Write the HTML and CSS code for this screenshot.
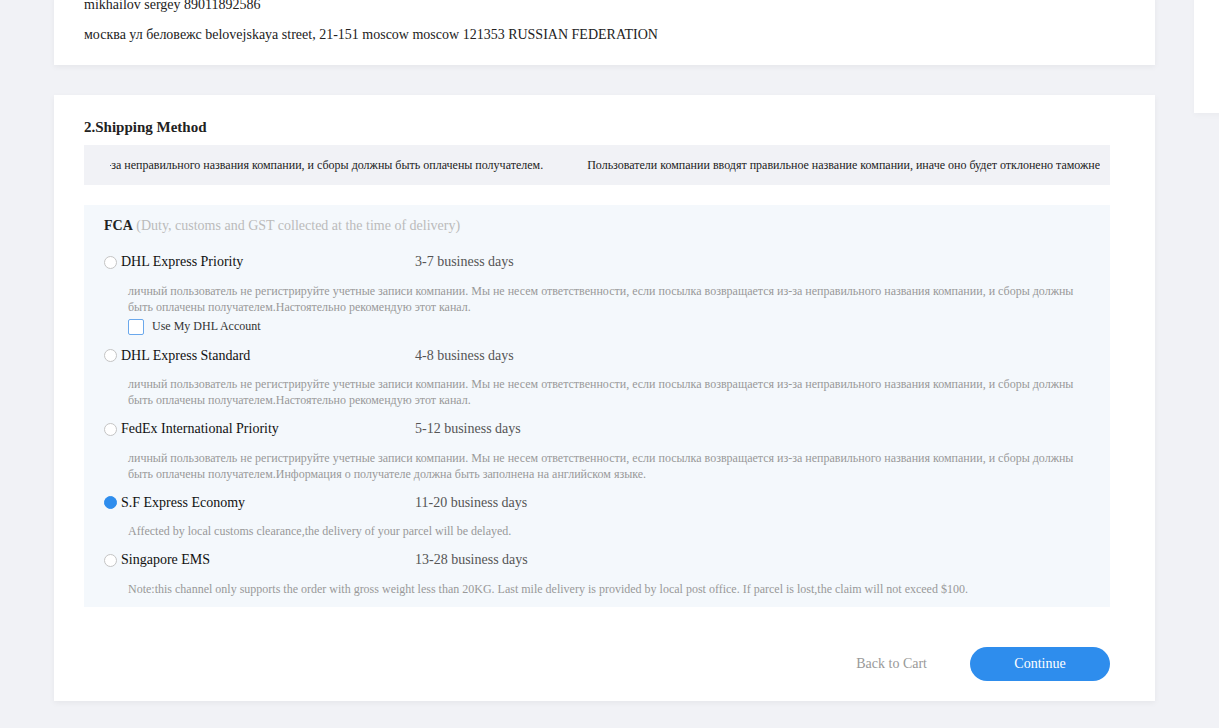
FILE: index.html
```html
<!DOCTYPE html>
<html lang="ru">
<head>
<meta charset="utf-8">
<title>Checkout</title>
<link rel="stylesheet" href="styles.css">
</head>
<body>
<div class="page">
  <main class="main">
    <section class="card address-card">
      <p class="addr-line">mikhailov sergey 89011892586</p>
      <p class="addr-line">москва ул беловежс belovejskaya street, 21-151 moscow moscow 121353 RUSSIAN FEDERATION</p>
    </section>

    <section class="card shipping-card">
      <h2 class="section-title">2.Shipping Method</h2>
      <div class="notice">
        <div class="notice-clip">
          <div class="notice-track">
            <span class="notice-item first">из-за неправильного названия компании, и сборы должны быть оплачены получателем.</span>
            <span class="notice-item">Пользователи компании вводят правильное название компании, иначе оно будет отклонено таможней.</span>
          </div>
        </div>
      </div>

      <div class="methods">
        <div class="group-title"><b>FCA</b> <span class="group-note">(Duty, customs and GST collected at the time of delivery)</span></div>

        <div class="option">
          <div class="opt-row"><span class="radio"></span><span class="opt-name">DHL Express Priority</span><span class="opt-days">3-7 business days</span></div>
          <p class="opt-desc">личный пользователь не регистрируйте учетные записи компании. Мы не несем ответственности, если посылка возвращается из-за неправильного названия компании, и сборы должны быть оплачены получателем.Настоятельно рекомендую этот канал.</p>
          <div class="chk-row"><span class="checkbox"></span><span class="chk-label">Use My DHL Account</span></div>
        </div>

        <div class="option">
          <div class="opt-row"><span class="radio"></span><span class="opt-name">DHL Express Standard</span><span class="opt-days">4-8 business days</span></div>
          <p class="opt-desc">личный пользователь не регистрируйте учетные записи компании. Мы не несем ответственности, если посылка возвращается из-за неправильного названия компании, и сборы должны быть оплачены получателем.Настоятельно рекомендую этот канал.</p>
        </div>

        <div class="option">
          <div class="opt-row"><span class="radio"></span><span class="opt-name">FedEx International Priority</span><span class="opt-days">5-12 business days</span></div>
          <p class="opt-desc">личный пользователь не регистрируйте учетные записи компании. Мы не несем ответственности, если посылка возвращается из-за неправильного названия компании, и сборы должны быть оплачены получателем.Информация о получателе должна быть заполнена на английском языке.</p>
        </div>

        <div class="option">
          <div class="opt-row"><span class="radio checked"></span><span class="opt-name">S.F Express Economy</span><span class="opt-days">11-20 business days</span></div>
          <p class="opt-desc">Affected by local customs clearance,the delivery of your parcel will be delayed.</p>
        </div>

        <div class="option">
          <div class="opt-row"><span class="radio"></span><span class="opt-name">Singapore EMS</span><span class="opt-days">13-28 business days</span></div>
          <p class="opt-desc">Note:this channel only supports the order with gross weight less than 20KG. Last mile delivery is provided by local post office. If parcel is lost,the claim will not exceed $100.</p>
        </div>
      </div>

      <div class="actions">
        <a class="back-link">Back to Cart</a>
        <button class="continue-btn" type="button">Continue</button>
      </div>
    </section>
  </main>
  <aside class="sidebar"></aside>
</div>
</body>
</html>
```

FILE: styles.css
```css
html, body {
  margin: 0;
  padding: 0;
  height: 100%;
  overflow: hidden;
}
body {
  background: #f1f2f6;
  font-family: "Liberation Serif", "Times New Roman", serif;
  color: #222;
}
.page {
  display: flex;
  align-items: flex-start;
  gap: 39px;
  padding-left: 54px;
  margin-top: -5px;
}
.main {
  flex: 0 0 1101px;
  width: 1101px;
  display: flex;
  flex-direction: column;
  gap: 30px;
}
.sidebar {
  flex: 0 0 300px;
  height: 118px;
  background: #fff;
  box-shadow: 0 2px 6px rgba(0, 0, 0, 0.03);
}
.card {
  background: #fff;
  box-shadow: 0 2px 6px rgba(0, 0, 0, 0.05);
}
.address-card {
  padding: 0 30px 20px;
}
.addr-line {
  margin: 0 0 10px;
  font-size: 14px;
  line-height: 20px;
  color: #222;
}
.addr-line:last-child {
  margin-bottom: 0;
}
.shipping-card {
  padding: 22px 45px 20px 30px;
}
.section-title {
  margin: 0 0 8px;
  font-size: 15px;
  line-height: 20px;
  font-weight: bold;
  color: #222;
}
.notice {
  height: 40px;
  background: #f1f2f6;
  padding: 0 10px 0 26px;
  display: flex;
  align-items: center;
}
.notice-clip {
  overflow: hidden;
  width: 100%;
}
.notice-track {
  display: flex;
  gap: 44px;
  white-space: nowrap;
  font-size: 12px;
  line-height: 16px;
  color: #222;
}
.notice-item.first {
  margin-left: -14px;
}
.methods {
  margin-top: 20px;
  background: #f4f8fc;
  padding: 11px 20px 10px;
}
.group-title {
  font-size: 14px;
  line-height: 20px;
  margin-bottom: 16px;
}
.group-title b {
  color: #222;
}
.group-note {
  color: #bbb;
}
.option {
  margin-bottom: 11px;
}
.option:last-child {
  margin-bottom: 0;
}
.opt-row {
  display: flex;
  align-items: center;
  height: 20px;
  font-size: 14px;
}
.radio {
  box-sizing: border-box;
  width: 13px;
  height: 13px;
  border: 1px solid #c4c4c4;
  border-radius: 50%;
  background: #fff;
  margin-right: 4px;
  flex: 0 0 13px;
}
.radio.checked {
  border-color: #2e8ded;
  background: #2e8ded;
}
.opt-name {
  width: 294px;
  color: #111;
}
.opt-days {
  color: #555;
}
.opt-desc {
  margin: 10.5px 0 0;
  padding-left: 24px;
  font-size: 12px;
  line-height: 16px;
  color: #999;
}
.chk-row {
  display: flex;
  align-items: center;
  margin-top: 4px;
  padding-left: 24px;
  height: 16px;
}
.checkbox {
  box-sizing: border-box;
  width: 16px;
  height: 16px;
  border: 1px solid #6aa8ec;
  border-radius: 2px;
  background: #fff;
  margin-right: 8px;
}
.chk-label {
  font-size: 12px;
  color: #333;
}
.actions {
  display: flex;
  justify-content: flex-end;
  align-items: center;
  gap: 43px;
  margin-top: 40px;
}
.back-link {
  font-size: 14px;
  color: #999;
  cursor: pointer;
}
.continue-btn {
  width: 140px;
  height: 34px;
  border: none;
  border-radius: 17px;
  background: #2e8ded;
  color: #fff;
  font-family: "Liberation Serif", "Times New Roman", serif;
  font-size: 14px;
  cursor: pointer;
}
```
